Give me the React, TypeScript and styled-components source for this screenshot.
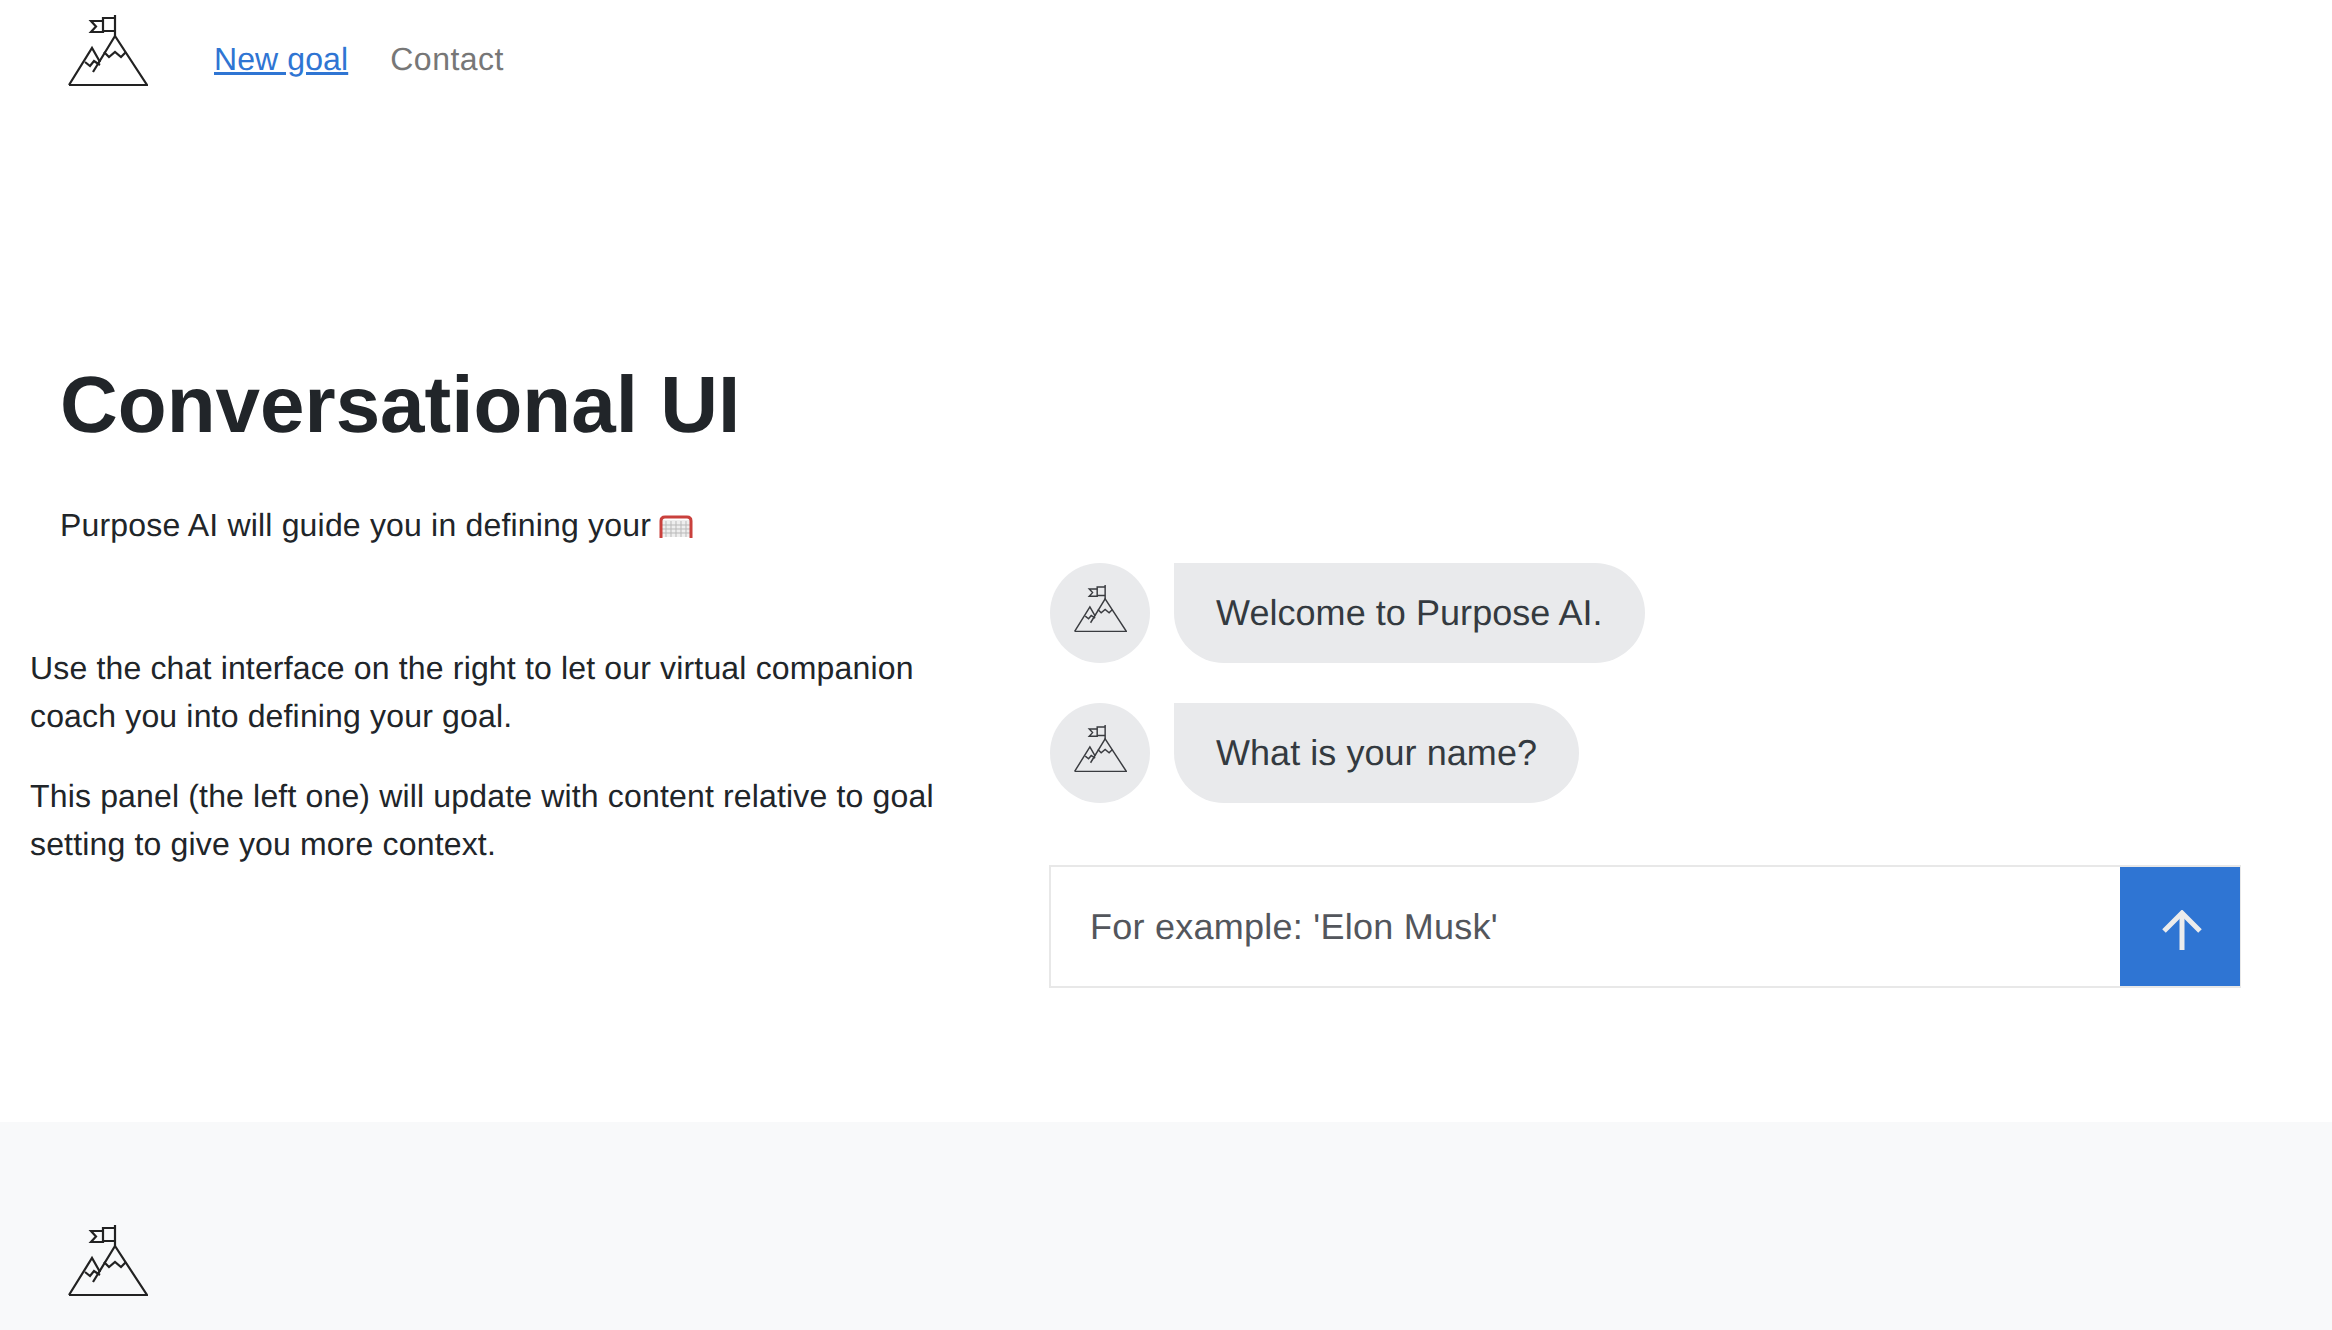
import React from 'react';
import styled, { createGlobalStyle } from 'styled-components';

const GlobalStyle = createGlobalStyle`
  html, body {
    margin: 0;
    padding: 0;
    background: #fff;
    color: #212529;
    font-family: "Liberation Sans", Arial, sans-serif;
    font-size: 32px;
    line-height: 48px;
    text-rendering: geometricPrecision;
  }
  * {
    box-sizing: border-box;
  }
`;

const Header = styled.header`
  display: flex;
  align-items: center;
  height: 117px;
  padding-left: 68px;
`;

const HeaderLogo = styled.div`
  margin-bottom: 16px;
`;

const Nav = styled.nav`
  display: flex;
  gap: 42px;
  margin-left: 66px;
`;

const NavLink = styled.a<{ $active?: boolean }>`
  color: ${(p) => (p.$active ? '#2f75d3' : '#777777')};
  text-decoration: ${(p) => (p.$active ? 'underline' : 'none')};
  letter-spacing: ${(p) => (p.$active ? '0.1px' : '0.5px')};
`;

const Main = styled.main`
  display: grid;
  grid-template-columns: 1049px 1192px;
  height: 1005px;
`;

const LeftPanel = styled.section`
  padding: 240px 60px 0 30px;
`;

const Intro = styled.div`
  padding-left: 30px;
  margin-bottom: 95px;
`;

const Title = styled.h1`
  margin: 0 0 48px;
  font-size: 80px;
  line-height: 96px;
  font-weight: 700;
`;

const Lead = styled.p`
  display: flex;
  align-items: center;
  gap: 8px;
  margin: 0;
  letter-spacing: 0.18px;
`;

const Text = styled.p`
  margin: 0 0 32px;
  letter-spacing: 0.16px;
`;

const ChatPanel = styled.section`
  display: flex;
  flex-direction: column;
  padding-top: 446px;
`;

const Row = styled.div`
  display: flex;
  gap: 24px;
  margin-left: 1px;
  margin-bottom: 40px;
`;

const Avatar = styled.div`
  display: flex;
  align-items: center;
  justify-content: center;
  width: 100px;
  height: 100px;
  padding-bottom: 8px;
  border-radius: 50%;
  background: #e9eaec;
`;

const Bubble = styled.div`
  display: flex;
  align-items: center;
  height: 100px;
  padding: 0 42px;
  border-radius: 0 50px 50px 50px;
  background: #e9eaec;
  color: #343a40;
  font-size: 36px;
  letter-spacing: 0.05px;
`;

const InputBar = styled.form`
  display: flex;
  height: 123px;
  margin-top: 22px;
  border: 2px solid #e8e8e8;
  border-right-width: 1px;
`;

const Field = styled.input`
  flex: 1;
  min-width: 0;
  border: 0;
  outline: 0;
  padding: 0 39px;
  background: #fff;
  font-family: inherit;
  font-size: 36px;
  letter-spacing: 0.25px;
  color: #495057;
  text-rendering: geometricPrecision;
  &::placeholder {
    color: #53565c;
    opacity: 1;
  }
`;

const SendButton = styled.button`
  display: flex;
  align-items: center;
  justify-content: center;
  width: 120px;
  border: 0;
  padding: 6px 0 0 3px;
  background: #2f75d3;
`;

const Footer = styled.footer`
  height: 208px;
  padding: 103px 0 0 68px;
  background: #f8f9fa;
`;

const Logo = ({ size = 80 }: { size?: number }) => (
  <svg
    width={size}
    height={(size * 72) / 80}
    viewBox="0 0 80 72"
    fill="none"
    stroke={size >= 80 ? '#222' : '#3a3c40'}
    strokeWidth={size >= 80 ? 2.2 : 2.2}
    strokeLinejoin="miter"
    style={{ display: 'block' }}
  >
    <path d="M1 70H79L47 21L25 57" />
    <path d="M1 70L24 33L32 47" />
    <path d="M36 37L41 42L47 37L53 42L58 37" />
    <path d="M17 47L22 51L26 46L32 50" />
    <path d="M47 21V0" />
    <path d="M47 3H35V16H47" />
    <path d="M35 6H23L28 11.500L23 17H35V16" />
  </svg>
);

const GoalNet = () => (
  <svg width="34" height="24" viewBox="0 0 34 24" style={{ marginTop: 4 }}>
    <path d="M2 5H32V22H2Z" fill="#eee" />
    <path
      d="M7 6V22M12 6V22M17 6V22M22 6V22M27 6V22M3 10H31M3 14H31M3 18H31"
      stroke="#b9b9b9"
      strokeWidth="1"
    />
    <path
      d="M2 23V6Q2 2 6 2H28Q32 2 32 6V23"
      fill="none"
      stroke="#c9403c"
      strokeWidth="3"
    />
  </svg>
);

const ArrowUp = () => (
  <svg width="40" height="40" viewBox="0 0 40 40" fill="none" stroke="#ececec" strokeWidth="5">
    <path d="M20 40V4" />
    <path d="M2 21L20 3L38 21" />
  </svg>
);

const messages = ['Welcome to Purpose AI.', 'What is your name?'];

const App: React.FC = () => {
  return (
    <>
      <GlobalStyle />
      <Header>
        <HeaderLogo>
          <Logo />
        </HeaderLogo>
        <Nav>
          <NavLink $active href="#">
            New goal
          </NavLink>
          <NavLink href="#">Contact</NavLink>
        </Nav>
      </Header>
      <Main>
        <LeftPanel>
          <Intro>
            <Title>Conversational UI</Title>
            <Lead>
              Purpose AI will guide you in defining your <GoalNet />
            </Lead>
          </Intro>
          <Text>
            Use the chat interface on the right to let our virtual companion coach you into defining your goal.
          </Text>
          <Text>
            This panel (the left one) will update with content relative to goal setting to give you more context.
          </Text>
        </LeftPanel>
        <ChatPanel>
          {messages.map((message) => (
            <Row key={message}>
              <Avatar>
                <Logo size={53} />
              </Avatar>
              <Bubble>{message}</Bubble>
            </Row>
          ))}
          <InputBar onSubmit={(e) => e.preventDefault()}>
            <Field placeholder="For example: 'Elon Musk'" />
            <SendButton type="submit" aria-label="Send">
              <ArrowUp />
            </SendButton>
          </InputBar>
        </ChatPanel>
      </Main>
      <Footer>
        <Logo />
      </Footer>
    </>
  );
};

export default App;
